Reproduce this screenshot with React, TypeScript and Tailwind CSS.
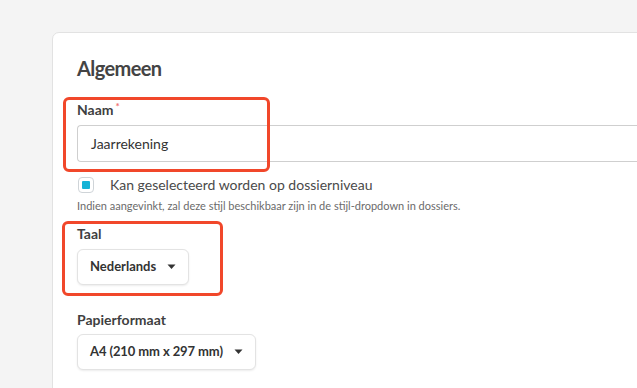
import React from "react";

function Caret() {
  return (
    <svg width="9" height="6" viewBox="0 0 9 6" className="ml-[11px]">
      <path d="M0.5 0.5 L8.5 0.5 L4.5 5 Z" fill="#333" />
    </svg>
  );
}

export default function App() {
  return (
    <div
      className="w-[637px] h-[388px] overflow-hidden bg-[#f4f4f4] pl-[52px] pt-[32px]"
      style={{ fontFamily: "Lato, 'Noto Sans', sans-serif" }}
    >
      <div className="relative w-[700px] h-[400px] bg-white border border-[#e2e2e2] rounded-tl-[7px] pl-[24px] pt-[22px] text-[#4a4a4a]">
        <h2 className="text-[20px] font-bold leading-[26px] tracking-[-0.6px] text-[#444]">Algemeen</h2>

        <div className="mt-[20px]">
          <div className="flex items-start text-[14px] font-bold leading-[18px] text-[#3f3f3f]">
            Naam<span className="ml-[2px] text-[#f07070] text-[10px] leading-[10px]">*</span>
          </div>
          <div className="mt-[6px] h-[37px] border border-[#cfcfcf] rounded-l-[4px] border-r-0 flex items-center pl-[13px] text-[14px] text-[#333]">
            Jaarrekening
          </div>
        </div>

        <div className="mt-[14px] flex items-center">
          <div className="w-[16px] h-[16px] ml-[1px] rounded-[4px] border border-[#cfd4d8] flex items-center justify-center">
            <div className="w-[8px] h-[8px] bg-[#16b3d6] rounded-[1px]" />
          </div>
          <span className="ml-[16px] text-[14px] leading-[18px] text-[#4a4a4a]">
            Kan geselecteerd worden op dossierniveau
          </span>
        </div>
        <p className="mt-[5px] text-[11px] leading-[14px] text-[#6b6b6b]">
          Indien aangevinkt, zal deze stijl beschikbaar zijn in de stijl-dropdown in dossiers.
        </p>

        <div className="mt-[12px]">
          <div className="text-[14px] font-bold leading-[18px] text-[#3f3f3f]">Taal</div>
          <button className="mt-[6px] h-[36px] px-[12px] rounded-[6px] border border-[#e3e3e3] shadow-[0_1px_2px_rgba(0,0,0,0.08)] bg-white flex items-center text-[13px] font-bold text-[#333]">
            Nederlands
            <Caret />
          </button>
        </div>

        <div className="mt-[26px]">
          <div className="text-[14px] font-bold leading-[18px] text-[#3f3f3f]">Papierformaat</div>
          <button className="mt-[5px] h-[36px] px-[12px] rounded-[6px] border border-[#e3e3e3] shadow-[0_1px_2px_rgba(0,0,0,0.08)] bg-white flex items-center text-[13px] font-bold text-[#333] tracking-[-0.1px]">
            A4 (210 mm x 297 mm)
            <Caret />
          </button>
        </div>

        <div className="absolute left-[10px] top-[64px] w-[207px] h-[75px] border-[3px] border-[#f1472a] rounded-[6px]" />
        <div className="absolute left-[9px] top-[188px] w-[161px] h-[75px] border-[3px] border-[#f1472a] rounded-[6px]" />
      </div>
    </div>
  );
}
